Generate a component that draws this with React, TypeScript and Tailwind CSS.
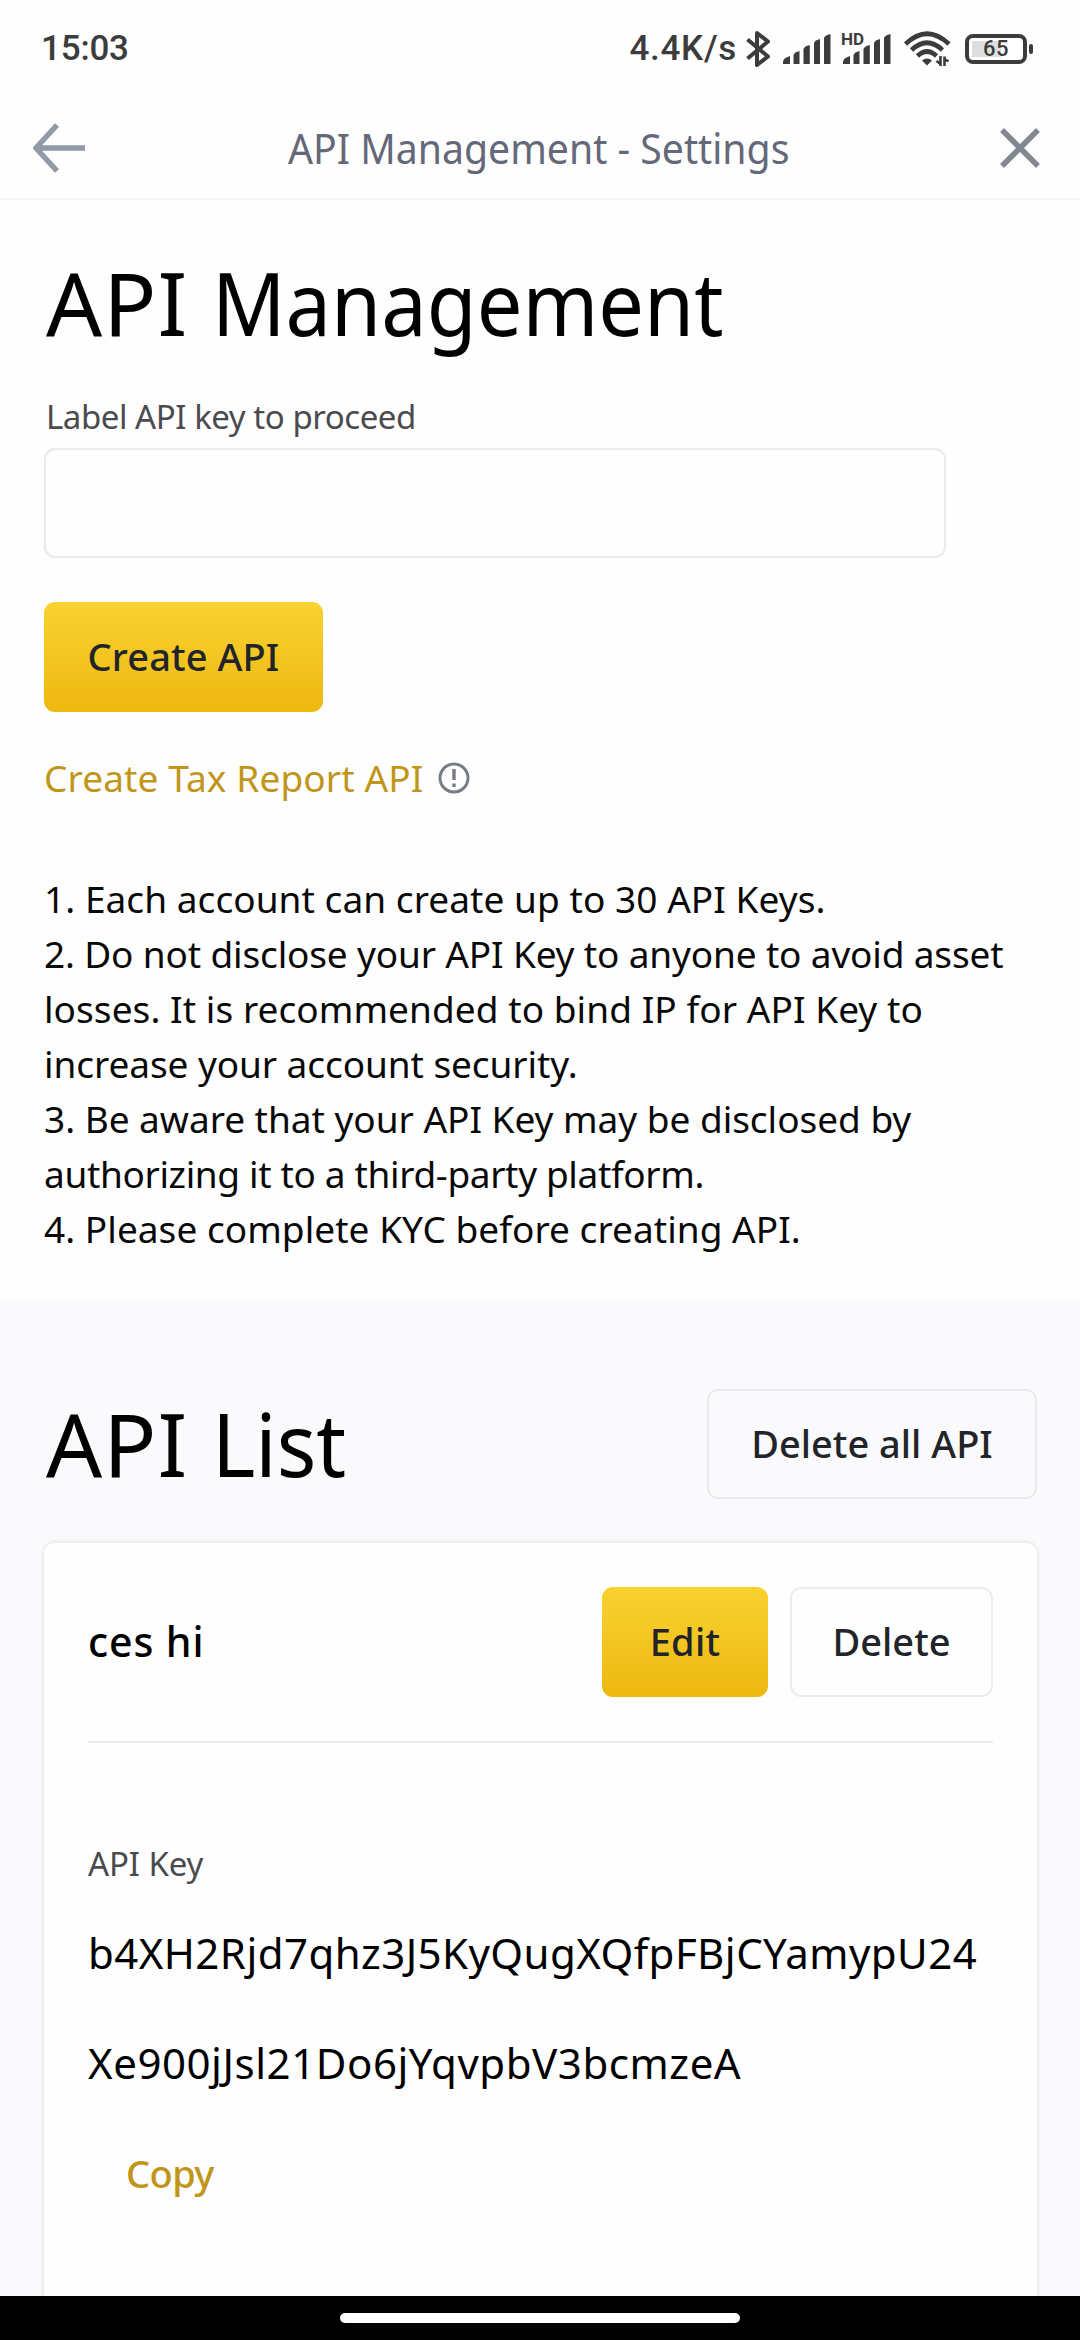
import type { ReactNode } from "react";

function Bluetooth() {
  return (
    <svg className="ml-2 h-[40px] w-[26px] shrink-0" viewBox="0 0 26 40" fill="none" stroke="#3c3c3c" strokeWidth="4" strokeLinejoin="round">
      <path d="M2.500 10.500 23 27.500 12 36V4l11 8.500L2.500 29.500" />
    </svg>
  );
}

function SignalBars() {
  return (
    <svg className="h-[30px] w-[48px]" viewBox="0 0 48 30" fill="#3c3c3c">
      <path d="M0 30v-2q0-4 7-6v8zM10.500 30V21q1-3 6-4v13zM20.500 30V15q1-3 6.300-4v19zM31 30V9q1-3 6-4v25zM41 30V4q1-3 6.500-4v30z" />
    </svg>
  );
}

function Wifi() {
  return (
    <svg className="ml-[13px] h-[36px] w-[48px] shrink-0" viewBox="0 0 48 36" fill="none" stroke="#3c3c3c" strokeWidth="4.600">
      <path d="M1.500 13Q23 -7.500 45 13" />
      <path d="M7.500 19Q23 4.500 38.500 19" />
      <path d="M13.500 25Q23 16 32.500 25" />
      <path d="M18 29.500q5-4 10 0L23 34.500z" fill="#3c3c3c" stroke="none" />
      <path d="M36.500 25v10M40.500 35V25.500M36.500 33l-4-3M40.500 28l4 2.500" strokeWidth="2.600" />
    </svg>
  );
}

function StatusBar() {
  return (
    <div className="flex h-[98px] items-center pl-[41px] pr-[47px] font-['Roboto',sans-serif] text-[35px] font-medium text-[#3c3c3c]">
      <span className="tracking-[-0.2px]">15:03</span>
      <div className="ml-auto flex items-center">
        <span className="tracking-[0.7px]">4.4K/s</span>
        <Bluetooth />
        <div className="ml-[12px]"><SignalBars /></div>
        <div className="relative ml-[12px]">
          <SignalBars />
          <span className="absolute -left-[2px] -top-[2px] text-[17px] leading-[14px] font-bold">HD</span>
        </div>
        <Wifi />
        <div className="ml-[13px] flex h-[30px] w-[62px] items-center rounded-[8px] border-4 border-[#3c3c3c] p-[3px]">
          <div className="flex h-full w-full items-center justify-center bg-linear-to-r from-[#dedede] from-60% to-white to-60% text-[22px] leading-none tracking-[0.5px]">65</div>
        </div>
        <div className="ml-[2px] h-[10px] w-[4px] rounded-[2px] bg-[#3c3c3c]" />
      </div>
    </div>
  );
}

function Header() {
  return (
    <div className="flex h-[102px] items-center border-b-2 border-[#f5f4f8] pl-[33px] pr-[40px]">
      <svg className="h-[50px] w-[53px] shrink-0" viewBox="0 0 53 50" fill="none" stroke="#929aa6" strokeWidth="5.500">
        <path d="M52 25H4M24 2 3 25l21 23" />
      </svg>
      <h2 className="ml-[202px] origin-left scale-x-[0.956] text-[41px] leading-[56px] whitespace-nowrap text-[#646878]">API Management - Settings</h2>
      <svg className="ml-auto h-[40px] w-[40px] shrink-0" viewBox="0 0 40 40" fill="none" stroke="#808791" strokeWidth="5.500">
        <path d="M2 2l36 36M38 2 2 38" />
      </svg>
    </div>
  );
}

function Heading({ children, className }: { children: string; className: string }) {
  return (
    <h1 className="flex pl-[2px] text-[88px] leading-[108px] pb-[2px]">
      <span className="w-[166px] shrink-0 tracking-[1px]">API</span>{" "}
      <span className={`origin-left ${className}`}>{children}</span>
    </h1>
  );
}

function Button({ children, className, primary }: { children: ReactNode; className: string; primary?: boolean }) {
  const look = primary
    ? "bg-linear-to-b from-[#f8d22f] to-[#eeb80e]"
    : "border-2 border-[#edebee]";
  return (
    <button className={`flex h-[110px] shrink-0 items-center justify-center rounded-[11px] pb-[3px] text-[38px] leading-[56px] font-medium text-[#212529] ${look} ${className}`}>
      {children}
    </button>
  );
}

export default function App() {
  return (
    <div className="flex h-[2340px] w-[1080px] flex-col overflow-hidden bg-[#fefefe] font-['Noto_Sans',sans-serif] text-black">
      <StatusBar />
      <Header />
      <section className="h-[1100px] shrink-0 px-[44px] pt-[48px]">
        <Heading className="scale-x-[0.922]">Management</Heading>
        <label className="mt-[37px] block text-[33px] leading-[44px] tracking-[-0.45px] pl-[2px] text-[#4b4b4e]">Label API key to proceed</label>
        <div className="mt-[9px] h-[110px] w-[902px] rounded-[11px] border-2 border-[#eaeaea]" />
        <Button primary className="mt-[44px] w-[279px] tracking-[0.1px]">Create API</Button>
        <div className="mt-[38px] flex items-center text-[37px] leading-[55px] tracking-[0.12px] text-[#c0951a]">
          Create Tax Report API
          <svg className="ml-[15px] h-[32px] w-[32px]" viewBox="0 0 32 32" fill="none" stroke="#777d86" strokeWidth="3">
            <circle cx="16" cy="16" r="14" />
            <path d="M16 7v11M16 21.500v3.500" strokeWidth="3.400" />
          </svg>
        </div>
        <div className="mt-[66px] text-[37px] leading-[55px] whitespace-nowrap text-[#080808]">
          <p className="tracking-[0.06px]">1. Each account can create up to 30 API Keys.</p>
          <p className="tracking-[-0.15px]">2. Do not disclose your API Key to anyone to avoid asset</p>
          <p className="tracking-[0.07px]">losses. It is recommended to bind IP for API Key to</p>
          <p className="tracking-[-0.07px]">increase your account security.</p>
          <p className="tracking-[-0.02px]">3. Be aware that your API Key may be disclosed by</p>
          <p className="tracking-[-0.35px]">authorizing it to a third-party platform.</p>
          <p className="tracking-[0.05px]">4. Please complete KYC before creating API.</p>
        </div>
      </section>
      <section className="min-h-0 flex-1 overflow-hidden bg-[#faf9fb] pr-[43px] pl-[44px] pt-[89px]">
        <div className="flex items-center justify-between">
          <Heading className="scale-x-[0.94]">List</Heading>
          <Button className="w-[330px]">Delete all API</Button>
        </div>
        <div className="mt-[44px] h-[900px] rounded-[11px] bg-[#fefefe] p-[44px] shadow-[0_0_5px_rgba(20,21,26,0.13)]">
          <div className="flex items-center">
            <span className="mr-auto pb-[2px] text-[41px] leading-[56px] font-medium tracking-[0.9px]">ces hi</span>
            <Button primary className="w-[166px] tracking-[0.3px]">Edit</Button>
            <Button className="ml-[22px] w-[203px]">Delete</Button>
          </div>
          <div className="mt-[44px] h-[2px] bg-[#eae9ec]" />
          <div className="mt-[99px] text-[33px] leading-[44px] tracking-[-0.1px] text-[#4b4b4e]">API Key</div>
          <div className="mt-[12px] text-[42px] leading-[110px] whitespace-nowrap">
            <p className="tracking-[0.44px]">b4XH2Rjd7qhz3J5KyQugXQfpFBjCYamypU24</p>
            <p className="tracking-[0.55px]">Xe900jJsl21Do6jYqvpbV3bcmzeA</p>
          </div>
          <button className="ml-[38px] text-[38px] leading-[110px] font-medium tracking-[-0.6px] text-[#c0951a]">Copy</button>
        </div>
      </section>
      <div className="flex h-[44px] shrink-0 justify-center bg-black pt-[17px]">
        <div className="h-[10px] w-[400px] rounded-full bg-white" />
      </div>
    </div>
  );
}
